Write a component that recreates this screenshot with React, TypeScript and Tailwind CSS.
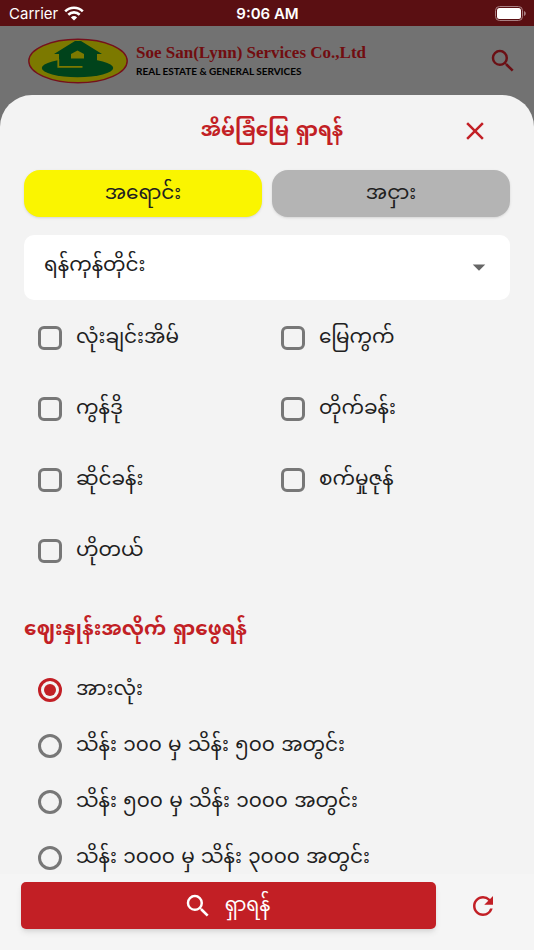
import React, { useState } from 'react';
import { MdArrowDropDown, MdClose, MdRefresh, MdSearch } from 'react-icons/md';

const propertyTypes = ['လုံးချင်းအိမ်', 'မြေကွက်', 'ကွန်ဒို', 'တိုက်ခန်း', 'ဆိုင်ခန်း', 'စက်မှုဇုန်', 'ဟိုတယ်'];

const priceRanges = [
  'အားလုံး',
  'သိန်း ၁၀၀ မှ သိန်း ၅၀၀ အတွင်း',
  'သိန်း ၅၀၀ မှ သိန်း ၁၀၀၀ အတွင်း',
  'သိန်း ၁၀၀၀ မှ သိန်း ၃၀၀၀ အတွင်း',
];

const StatusBar: React.FC = () => (
  <div className="grid h-[26px] shrink-0 grid-cols-3 items-center bg-[#5a0f12] pl-[9px] pr-2 font-['Inter',sans-serif] text-[15px] leading-none text-white">
    <div className="flex items-center gap-1.5">
      <span>Carrier</span>
      <svg width="20" height="15" viewBox="0 0 20 15" fill="none" stroke="white" strokeWidth="2.6">
        <path d="M1.2 5.4a12.6 12.6 0 0 1 17.6 0" />
        <path d="M4.3 8.7a8.2 8.2 0 0 1 11.4 0" />
        <path d="M10 14.6 6.9 11.4a4.5 4.5 0 0 1 6.2 0z" fill="white" stroke="none" />
      </svg>
    </div>
    <span className="text-center font-semibold">9:06 AM</span>
    <svg className="justify-self-end" width="31" height="15" viewBox="0 0 31 15">
      <rect x="0.5" y="0.5" width="27" height="14" rx="4" fill="none" stroke="#a98083" />
      <rect x="2" y="2" width="24" height="11" rx="2.5" fill="white" />
      <path d="M29 5v5c1.2-.5 1.8-1.4 1.8-2.5S30.2 5.5 29 5z" fill="#a98083" />
    </svg>
  </div>
);

const Logo: React.FC = () => (
  <svg width="100" height="46" viewBox="0 0 100 46">
    <ellipse cx="50" cy="23" rx="49.2" ry="21.8" fill="#7c7900" stroke="#75101c" strokeWidth="1.4" />
    <ellipse cx="49.5" cy="30" rx="35.7" ry="9.2" fill="#00431b" />
    <path d="M47 3h6l21 13h-5v11H31V16h-5z" fill="#00431b" />
    <path d="M43 20.5V16l6.500-3.500L56 16v4.500z" fill="#7c7900" />
    <path d="M30.3 21v7.800h24.200" fill="none" stroke="#7c7900" strokeWidth="1.8" />
  </svg>
);

export default function App() {
  const [deal, setDeal] = useState('sale');
  const [types, setTypes] = useState<string[]>([]);
  const [price, setPrice] = useState(priceRanges[0]);

  const toggleType = (name: string) => {
    setTypes(types.includes(name) ? types.filter(t => t !== name) : [...types, name]);
  };

  const reset = () => {
    setTypes([]);
    setPrice(priceRanges[0]);
  };

  return (
    <div className="flex h-screen flex-col bg-[#727272] font-['DejaVu_Sans','Noto_Sans_Myanmar',sans-serif] text-[#202020]">
      <StatusBar />

      <header className="flex h-[69px] shrink-0 items-center justify-between pl-7 pr-4">
        <div className="flex items-center gap-2">
          <Logo />
          <div>
            <p className="font-['Liberation_Serif',serif] text-[17px] font-bold leading-5 text-[#710d10]">Soe San(Lynn) Services Co.,Ltd</p>
            <p className="font-['Lato',sans-serif] text-[10px] font-bold leading-4 text-black">REAL ESTATE &amp; GENERAL SERVICES</p>
          </div>
        </div>
        <button aria-label="Search" className="text-[#6b0f14]">
          <MdSearch size={30} />
        </button>
      </header>

      <main className="flex min-h-0 flex-1 flex-col rounded-t-[32px] bg-[#f3f3f3]">
        <div className="min-h-0 flex-1 overflow-y-auto px-6 [scrollbar-width:none]">
          {/* Title */}
          <div className="grid h-[75px] grid-cols-[1fr_auto_1fr] items-center pb-1">
            <h1 className="col-start-2 ml-2.5 pb-1 text-xl font-bold text-[#c21f25]">အိမ်ခြံမြေ ရှာရန်</h1>
            <button aria-label="Close" className="mr-5 justify-self-end text-[#c21f25]">
              <MdClose size={30} />
            </button>
          </div>

          {/* Sale / rent */}
          <div className="grid grid-cols-2 gap-2.5">
            <button
              onClick={() => setDeal('sale')}
              className={`h-[47px] rounded-2xl pb-1 text-xl shadow ${deal === 'sale' ? 'bg-[#faf500]' : 'bg-[#b4b4b4]'}`}
            >
              အရောင်း
            </button>
            <button
              onClick={() => setDeal('rent')}
              className={`h-[47px] rounded-2xl pb-1 text-xl shadow ${deal === 'rent' ? 'bg-[#faf500]' : 'bg-[#b4b4b4]'}`}
            >
              အငှား
            </button>
          </div>

          <div className="relative mt-[18px]">
            <select aria-label="Region" className="h-[65px] w-full appearance-none rounded-[10px] bg-white px-5 pb-2 text-xl">
              <option>ရန်ကုန်တိုင်း</option>
            </select>
            <MdArrowDropDown size={30} className="pointer-events-none absolute right-4 top-[17px] text-[#666666]" />
          </div>

          {/* Property types */}
          <div className="mt-0.5 grid grid-cols-2">
            {propertyTypes.map(name => (
              <label key={name} className="flex h-[71px] items-center gap-3.5 pl-3.5 text-xl">
                <input
                  type="checkbox"
                  checked={types.includes(name)}
                  onChange={() => toggleType(name)}
                  className="size-6 shrink-0 appearance-none rounded-md border-3 border-[#777777] checked:border-[#c21f25] checked:bg-[#c21f25]"
                />
                <span className="pb-1">{name}</span>
              </label>
            ))}
          </div>

          {/* Price */}
          <fieldset>
            <legend className="flex h-[76px] items-end pb-5 text-xl font-bold text-[#c21f25]">ဈေးနှုန်းအလိုက် ရှာဖွေရန်</legend>
            {priceRanges.map(range => (
              <label key={range} className="flex h-14 items-center gap-3.5 pl-3.5 text-xl">
                <input
                  type="radio"
                  name="price"
                  checked={price === range}
                  onChange={() => setPrice(range)}
                  className="size-6 shrink-0 appearance-none rounded-full border-3 border-[#777777] bg-clip-content p-[3px] checked:border-[#c21f25] checked:bg-[#c21f25]"
                />
                <span className="pb-1">{range}</span>
              </label>
            ))}
          </fieldset>
        </div>

        <footer className="flex h-[76px] shrink-0 items-start bg-[#f5f5f5] pl-[21px] pr-[5px] pt-2">
          <button className="flex h-[47px] flex-1 items-center justify-center gap-3 rounded-[5px] bg-[#c21f25] pr-1 text-[19px] text-white shadow-md">
            <MdSearch size={30} />
            <span className="pb-0.5">ရှာရန်</span>
          </button>
          <button aria-label="Reset" onClick={reset} className="flex h-[47px] w-[93px] items-center justify-center text-[#c21f25]">
            <MdRefresh size={30} />
          </button>
        </footer>
      </main>
    </div>
  );
}
